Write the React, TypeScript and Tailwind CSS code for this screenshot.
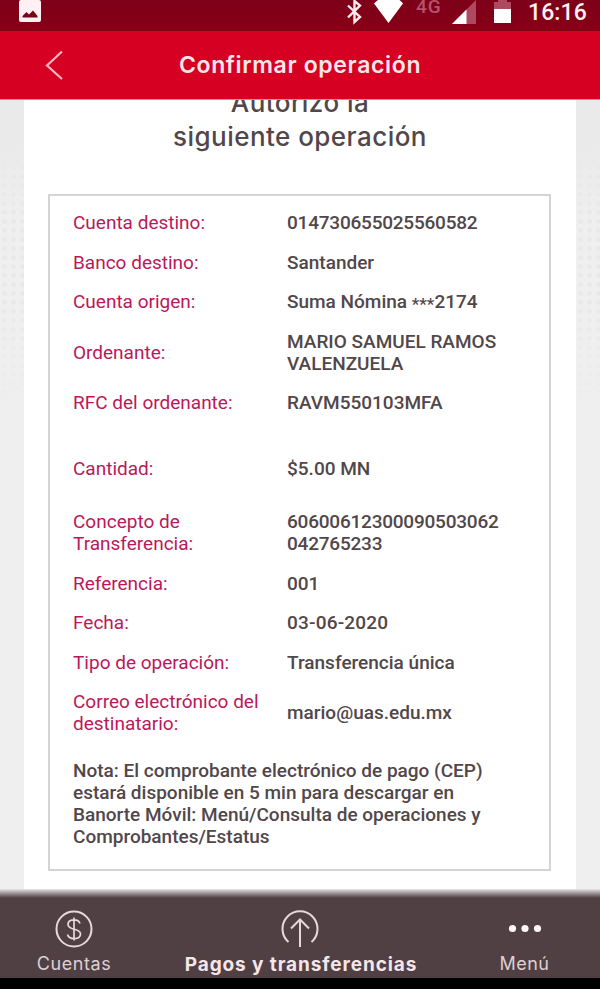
import clsx from "clsx";

const ROWS = [
  { label: "Cuenta destino:", value: "014730655025560582", valueClass: "tracking-[-0.22px]" },
  { label: "Banco destino:", value: "Santander" },
  { label: "Cuenta origen:", value: "Suma Nómina ***2174" },
  { label: "Ordenante:", value: "MARIO SAMUEL RAMOS\nVALENZUELA" },
  { label: "RFC del ordenante:", value: "RAVM550103MFA" },
  { label: "Cantidad:", value: "$5.00 MN", className: "mt-[26px] mb-[14px]" },
  {
    label: "Concepto de\nTransferencia:",
    value: "60600612300090503062\n042765233",
    valueClass: "tracking-[-0.22px]",
  },
  { label: "Referencia:", value: "001" },
  { label: "Fecha:", value: "03-06-2020", valueClass: "tracking-[0.2px]" },
  { label: "Tipo de operación:", value: "Transferencia única" },
  { label: "Correo electrónico del\ndestinatario:", value: "mario@uas.edu.mx" },
];

const NOTE = [
  "Nota: El comprobante electrónico de pago (CEP)",
  "estará disponible en 5 min para descargar en",
  "Banorte Móvil: Menú/Consulta de operaciones y",
  "Comprobantes/Estatus",
];

function StatusBar() {
  return (
    <div className="flex h-[31px] shrink-0 items-start bg-linear-to-b from-[#7d0019] to-[#870016] pl-[19px] text-white">
      <svg width="22" height="22" viewBox="0 0 22 22" className="shrink-0">
        <rect x="0" y="0" width="22" height="22" rx="2" fill="#fff1f3" />
        <path d="M3.500 17.500v-1.500l4-4 2.500 2.500 4-4 4.500 5.500v1.500z" fill="#7d0019" />
      </svg>
      <svg width="18" height="25" viewBox="0 0 18 25" className="ml-[305px] shrink-0" fill="none" stroke="#ffe9ed" strokeWidth="2.400">
        <path d="M2 5.500l12 11.500-5.500 5V1l5.500 4.500L2 17.500" />
      </svg>
      <svg width="30" height="24" viewBox="0 0 30 24" className="ml-[10px] shrink-0">
        <path d="M0 3.500Q3 0 8-2h13q6 2 8 5.500L14.500 23z" fill="#fff" />
      </svg>
      <span className="mt-[-4px] ml-[12px] w-[28px] shrink-0 font-[Roboto] text-[19px] leading-[22px] font-medium tracking-[1px] text-[#b65269]">4G</span>
      <svg width="25" height="24" viewBox="0 0 25 24" className="ml-[8px] shrink-0">
        <path d="M0 24L24 0v24z" fill="#ad4a60" />
        <path d="M0 24L14.500 9.500V24z" fill="#fff" />
      </svg>
      <svg width="17" height="24" viewBox="0 0 17 24" className="ml-[17px] shrink-0">
        <path d="M0 2h4v-3h9v3h4v8H0z" fill="#ad4a60" />
        <path d="M0 9h17v14H0z" fill="#fff" />
      </svg>
      <span className="ml-[17px] font-[Roboto] text-[23px] leading-[25px] font-medium tracking-[0.1px] text-[#ffeff1]">16:16</span>
    </div>
  );
}

function Header() {
  return (
    <header className="grid h-[69px] shrink-0 grid-cols-[1fr_auto_1fr] items-center border-b border-[#ef8093] bg-[#d60022]">
      <svg width="18" height="30" viewBox="0 0 18 30" className="ml-[45px]" fill="none" stroke="#ffb8c4" strokeWidth="2.200">
        <path d="M17 1.500L2 15.500 17 29" />
      </svg>
      <h1 className="font-[Inter] text-[23px] font-semibold tracking-[0.65px] text-[#ffe6ea]">Confirmar operación</h1>
    </header>
  );
}

// the masking asterisks sit lower and smaller than the digits around them
function Masked({ text }: { text: string }) {
  const [before, after] = text.split("***");
  if (after === undefined) return text;
  return (
    <>
      {before}
      <span className="inline-block translate-y-[2px] text-[17px] leading-none">***</span>
      {after}
    </>
  );
}

type RowProps = { label: string; value: string; className?: string; valueClass?: string };

function Row({ label, value, className, valueClass }: RowProps) {
  return (
    <div className={clsx("grid grid-cols-[214px_1fr] items-center whitespace-pre", className)}>
      <dt className="text-[#bb1859]">{label}</dt>
      <dd className={clsx("font-medium text-[#51474a]", valueClass)}>
        <Masked text={value} />
      </dd>
    </div>
  );
}

function Tabs() {
  return (
    <nav className="flex h-[80px] shrink-0 bg-[#504044] font-[Inter] text-[18px] leading-[24px] text-[#dfcfd4]">
      <div className="flex w-[148px] flex-col items-center gap-[4px] pt-[12px]">
        <svg width="38" height="38" viewBox="0 0 38 38" fill="none" stroke="#e7d8dc" strokeWidth="2">
          <circle cx="19" cy="19" r="17.500" />
          <path d="M19 7.500v23M25 13.500C23.500 8.500 13 8.500 13 14.500c0 6.500 12.500 3 12.500 9.500 0 6-11.500 6-13 .5" strokeWidth="1.700" />
        </svg>
        <span className="tracking-[0.6px]">Cuentas</span>
      </div>
      <div className="flex w-[306px] flex-col items-center gap-[5px] pt-[12px] text-[#f5e6ea]">
        <svg width="38" height="38" viewBox="0 0 38 38" className="-ml-[2px]" fill="none" stroke="#e7d8dc" strokeWidth="2">
          <path d="M7.500 32A17.500 17.500 0 1 1 30.500 32M19 37V10M10 18.500l9-9 9 9" />
        </svg>
        <span className="text-[19px] font-bold tracking-[0.9px]">Pagos y transferencias</span>
      </div>
      <div className="flex w-[141px] flex-col items-center gap-[4px] pt-[12px]">
        <svg width="34" height="38" viewBox="0 0 34 38" fill="#fff5f7">
          <circle cx="4.500" cy="18.500" r="3.600" />
          <circle cx="17" cy="18.500" r="3.600" />
          <circle cx="29.500" cy="18.500" r="3.600" />
        </svg>
        <span className="tracking-[0.5px]">Menú</span>
      </div>
    </nav>
  );
}

export default function App() {
  return (
    <div className="flex h-[989px] w-[600px] flex-col overflow-hidden bg-black">
      <StatusBar />
      <Header />
      <main className="h-[789px] shrink-0 overflow-hidden bg-[#efefef] bg-[linear-gradient(#eaeaeb_40px,transparent_130px,transparent_200px,#efefef_320px),radial-gradient(#e8e8e9_1.5px,transparent_3px)] bg-size-[100%_100%,9px_9px] px-[24px]">
        <div className="flow-root h-full bg-white px-[24px]">
          <h2 className="-mt-[14px] h-[108px] text-center font-[Inter] text-[26px] leading-[34px] font-medium tracking-[0.45px] text-[#51474a]">
            Autorizo la
            <br />
            siguiente operación
          </h2>
          <div className="h-[677px] w-[503px] border-2 border-[#d3d4d5] pt-[16px] pl-[23px] font-[Roboto] text-[19px] leading-[22px]">
            <dl className="flex flex-col gap-[17.5px]">
              {ROWS.map((row) => (
                <Row key={row.label} {...row} />
              ))}
            </dl>
            <p className="mt-[25px] font-medium whitespace-pre text-[#51474a]">{NOTE.join("\n")}</p>
          </div>
        </div>
      </main>
      <div className="h-[9px] shrink-0 bg-linear-to-b from-[#e8e6e7] to-[#504044]" />
      <Tabs />
    </div>
  );
}
